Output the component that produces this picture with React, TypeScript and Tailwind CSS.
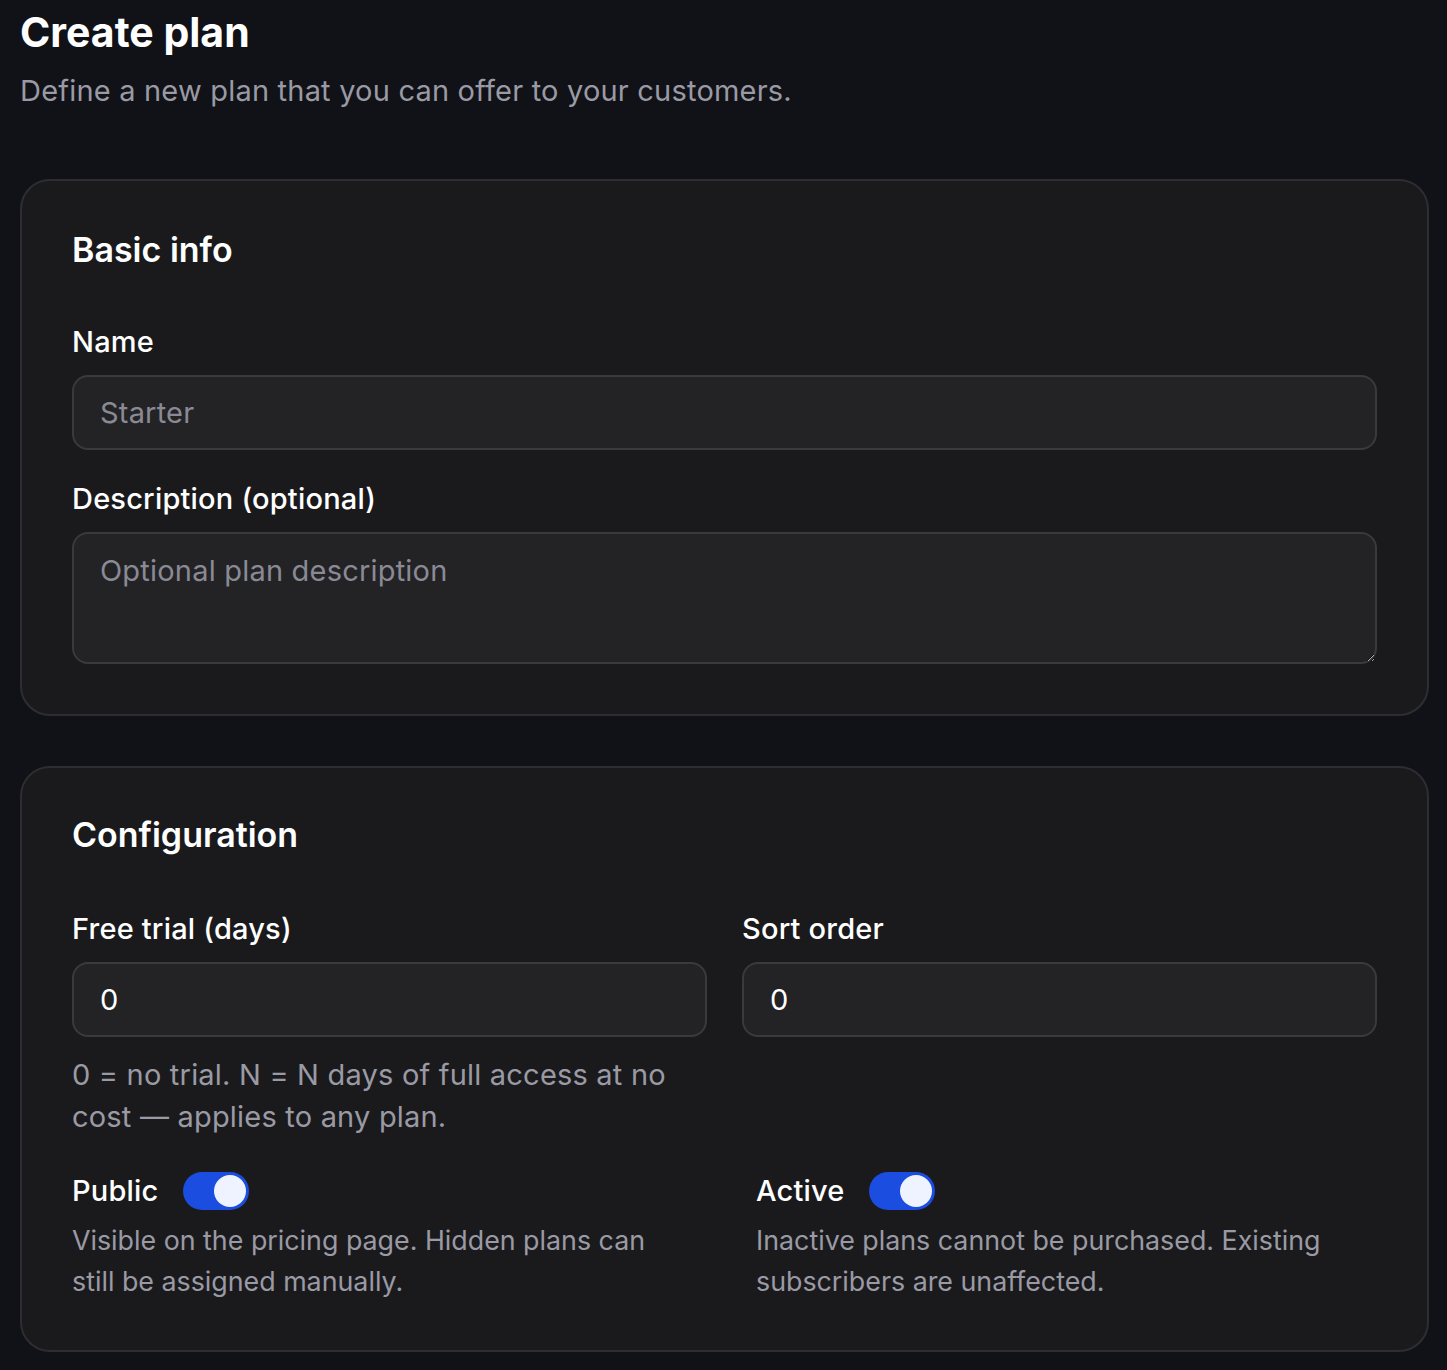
import React, { useState } from 'react';

function Toggle({ on, onChange }: { on: boolean; onChange: () => void }) {
    return (
        <button
            type="button"
            onClick={onChange}
            className={`relative w-[66px] h-[38px] rounded-full shrink-0 transition-colors ${on ? 'bg-[#1a4de0]' : 'bg-[#3a3a40]'}`}
        >
            <span
                className={`absolute top-[3px] w-[32px] h-[32px] rounded-full bg-[#eef3ff] transition-all ${on ? 'left-[31px]' : 'left-[3px]'}`}
            />
        </button>
    );
}

const labelCls = 'block text-[29px] tracking-[0.2px] leading-[42px] font-medium mb-[12px]';
const inputCls =
    'w-full h-[75px] bg-[#232326] border-2 border-[#3a3a3e] rounded-[16px] px-[26px] text-[29px] tracking-[0.2px] text-white placeholder:text-[#8a8a95] outline-none';

export default function App() {
    const [name, setName] = useState('');
    const [description, setDescription] = useState('');
    const [trial, setTrial] = useState('0');
    const [sort, setSort] = useState('0');
    const [isPublic, setIsPublic] = useState(true);
    const [isActive, setIsActive] = useState(true);

    return (
        <main className="min-h-screen bg-[#111217] text-white pl-[20px] pr-[18px] pt-[2px] pb-[18px] font-['Inter','Noto_Sans',sans-serif]">
            <header>
                <h1 className="text-[41px] leading-[60px] font-bold">Create plan</h1>
                <p className="text-[29px] tracking-[0.2px] leading-[42px] text-[#9a9aa5] mt-[8px]">
                    Define a new plan that you can offer to your customers.
                </p>
            </header>

            <section className="mt-[67px] bg-[#1a1a1d] border-2 border-[#2e2e32] rounded-[30px] px-[50px] pt-[44px] pb-[50px]">
                <h2 className="text-[34px] leading-[49px] font-semibold">Basic info</h2>

                <div className="mt-[47px]">
                    <label className={labelCls}>Name</label>
                    <input
                        type="text"
                        value={name}
                        onChange={(e) => setName(e.target.value)}
                        placeholder="Starter"
                        className={inputCls}
                    />
                </div>

                <div className="mt-[28px]">
                    <label className={labelCls}>Description (optional)</label>
                    <textarea
                        value={description}
                        onChange={(e) => setDescription(e.target.value)}
                        placeholder="Optional plan description"
                        className="block w-full h-[132px] bg-[#232326] border-2 border-[#3a3a3e] rounded-[16px] px-[26px] py-[16px] text-[29px] tracking-[0.2px] leading-[42px] text-white placeholder:text-[#8a8a95] outline-none"
                    />
                </div>
            </section>

            <section className="mt-[50px] bg-[#1a1a1d] border-2 border-[#2e2e32] rounded-[30px] px-[50px] pt-[42px] pb-[48px]">
                <h2 className="text-[34px] leading-[49px] font-semibold">Configuration</h2>

                <div className="mt-[49px] grid grid-cols-2 gap-x-[35px]">
                    <div>
                        <label className={labelCls}>Free trial (days)</label>
                        <input
                            type="number"
                            value={trial}
                            onChange={(e) => setTrial(e.target.value)}
                            className={inputCls}
                        />
                        <p className="mt-[17px] text-[29px] tracking-[0.2px] leading-[42px] text-[#9a9aa5]">
                            0 = no trial. N = N days of full access at no cost — applies to any plan.
                        </p>
                    </div>
                    <div>
                        <label className={labelCls}>Sort order</label>
                        <input
                            type="number"
                            value={sort}
                            onChange={(e) => setSort(e.target.value)}
                            className={inputCls}
                        />
                    </div>
                </div>

                <div className="mt-[32px] grid grid-cols-2 gap-x-[63px]">
                    <div>
                        <div className="flex items-center gap-[24px]">
                            <span className="text-[29px] tracking-[0.2px] leading-[42px] font-medium">Public</span>
                            <Toggle on={isPublic} onChange={() => setIsPublic(!isPublic)} />
                        </div>
                        <p className="mt-[8px] text-[26.8px] leading-[41px] text-[#9a9aa5]">
                            Visible on the pricing page. Hidden plans can still be assigned manually.
                        </p>
                    </div>
                    <div>
                        <div className="flex items-center gap-[24px]">
                            <span className="text-[29px] tracking-[0.2px] leading-[42px] font-medium">Active</span>
                            <Toggle on={isActive} onChange={() => setIsActive(!isActive)} />
                        </div>
                        <p className="mt-[8px] text-[26.8px] leading-[41px] text-[#9a9aa5]">
                            Inactive plans cannot be purchased. Existing subscribers are unaffected.
                        </p>
                    </div>
                </div>
            </section>
        </main>
    );
}
